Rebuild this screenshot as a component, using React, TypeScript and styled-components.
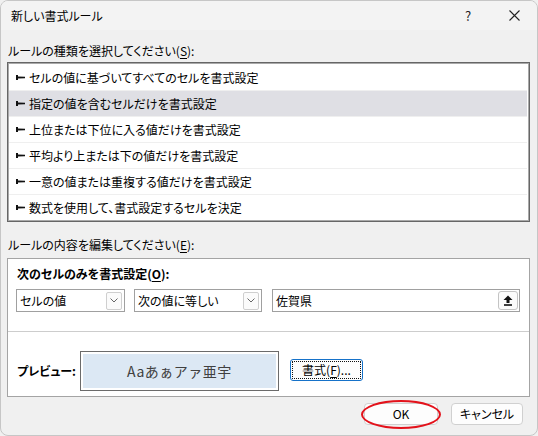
import styled, { createGlobalStyle } from 'styled-components';

const GlobalStyle = createGlobalStyle`
    html, body {
        margin: 0;
        padding: 0;
        background: #f0f0f0;
    }
    body {
        font-family: "Noto Sans CJK JP", "Noto Sans", sans-serif;
        font-size: 12px;
        color: #000;
        font-feature-settings: "palt";
    }
`;

const ruleTypes = [
    'セルの値に基づいてすべてのセルを書式設定',
    '指定の値を含むセルだけを書式設定',
    '上位または下位に入る値だけを書式設定',
    '平均より上または下の値だけを書式設定',
    '一意の値または重複する値だけを書式設定',
    '数式を使用して、書式設定するセルを決定',
];

const Pointer = () => (
    <svg width="9" height="5" viewBox="0 0 9 5">
        <path d="M0 0 L2 0 L2 1.5 L9 1.8 L9 3.2 L2 3.5 L2 5 L0 5 Z" fill="#111" />
    </svg>
);

const Chevron = () => (
    <svg width="8" height="5" viewBox="0 0 8 5">
        <path d="M0.5 0.5 L4 4 L7.5 0.5" fill="none" stroke="#666" strokeWidth="1" />
    </svg>
);

const UploadIcon = () => (
    <svg width="10" height="11" viewBox="0 0 10 11">
        <path d="M5 0.5 L9.5 5 L6.5 5 L6.5 8 L3.5 8 L3.5 5 L0.5 5 Z" fill="#111" />
        <rect x="1" y="9.2" width="8" height="1.6" fill="#111" />
    </svg>
);

const CloseIcon = () => (
    <svg width="11" height="11" viewBox="0 0 11 11">
        <path d="M0.5 0.5 L10.5 10.5 M10.5 0.5 L0.5 10.5" stroke="#222" strokeWidth="1.1" />
    </svg>
);

const App = () => {
    return (
        <>
            <GlobalStyle />
            <Dialog>
                <TitleBar>
                    <Title>新しい書式ルール</Title>
                    <TitleButton>?</TitleButton>
                    <TitleButton>
                        <CloseIcon />
                    </TitleButton>
                </TitleBar>
                <Body>
                    <SectionLabel>
                        ルールの種類を選択してください(<u>S</u>):
                    </SectionLabel>
                    <RuleList>
                        {ruleTypes.map((rule, i) => (
                            <RuleItem key={rule} $selected={i === 1} $first={i === 0}>
                                <Pointer />
                                <span>{rule}</span>
                            </RuleItem>
                        ))}
                    </RuleList>

                    <SectionLabel $gap={15}>
                        ルールの内容を編集してください(<u>E</u>):
                    </SectionLabel>
                    <EditPanel>
                        <EditHeading>
                            次のセルのみを書式設定(<u>O</u>):
                        </EditHeading>
                        <ConditionRow>
                            <Select $width={109}>
                                <SelectText>セルの値</SelectText>
                                <DropButton>
                                    <Chevron />
                                </DropButton>
                            </Select>
                            <Select $width={128}>
                                <SelectText>次の値に等しい</SelectText>
                                <DropButton>
                                    <Chevron />
                                </DropButton>
                            </Select>
                            <ValueInput>
                                <SelectText>佐賀県</SelectText>
                                <RefButton>
                                    <UploadIcon />
                                </RefButton>
                            </ValueInput>
                        </ConditionRow>
                        <Divider />
                        <PreviewRow>
                            <PreviewLabel>プレビュー:</PreviewLabel>
                            <PreviewBox>Aaあぁアァ亜宇</PreviewBox>
                            <FormatButton>
                                書式(<u>F</u>)...
                            </FormatButton>
                        </PreviewRow>
                    </EditPanel>

                    <Footer>
                        <Marked>
                            <DialogButton $width={74}>OK</DialogButton>
                            <Ellipse />
                        </Marked>
                        <DialogButton $width={72}>キャンセル</DialogButton>
                    </Footer>
                </Body>
            </Dialog>
        </>
    );
};

const Dialog = styled.div`
    width: 538px;
    height: 436px;
    box-sizing: border-box;
    background: #f0f0f0;
    border: 1px solid #c6c6c6;
    border-radius: 8px;
    overflow: hidden;
    display: flex;
    flex-direction: column;
`;

const TitleBar = styled.div`
    height: 29px;
    flex: none;
    display: flex;
    align-items: center;
    background: #f3f3f3;
`;

const Title = styled.div`
    flex: 1;
    padding-left: 10px;
    line-height: 16px;
`;

const TitleButton = styled.div`
    width: 46px;
    height: 29px;
    display: flex;
    align-items: center;
    justify-content: center;
    font-size: 13px;
    color: #222;
`;

const Body = styled.div`
    flex: 1;
    display: flex;
    flex-direction: column;
    padding: 0 7px 0 6px;
`;

const SectionLabel = styled.div<{ $gap?: number }>`
    margin-top: ${({ $gap }) => $gap ?? 13}px;
    line-height: 16px;
    padding-left: 1px;

    u {
        text-underline-offset: 2px;
    }
`;

const RuleList = styled.div`
    margin-top: 3px;
    height: 160px;
    box-sizing: border-box;
    background: #fff;
    border: 1px solid #666;
    box-shadow: inset 0 0 0 1px #a9a9a9;
    padding: 2px 2px 0 1px;
    display: flex;
    flex-direction: column;
`;

const RuleItem = styled.div<{ $selected: boolean; $first: boolean }>`
    height: 25px;
    flex: none;
    display: flex;
    align-items: center;
    gap: 4px;
    padding-left: 7px;
    border-top: ${({ $first }) => ($first ? 'none' : '1px solid #efefef')};
    background: ${({ $selected }) => ($selected ? '#dfdfe4' : 'transparent')};
    line-height: 16px;
`;

const EditPanel = styled.div`
    margin-top: 5px;
    height: 139px;
    box-sizing: border-box;
    background: #fff;
    border: 1px solid #a4a4a4;
    display: flex;
    flex-direction: column;
`;

const EditHeading = styled.div`
    padding: 7px 0 0 9px;
    line-height: 16px;
    font-weight: bold;

    u {
        text-underline-offset: 2px;
    }
`;

const ConditionRow = styled.div`
    margin-top: 7px;
    display: flex;
    gap: 9px;
    padding: 0 9px 0 8px;
`;

const Select = styled.div<{ $width: number }>`
    width: ${({ $width }) => $width}px;
    height: 23px;
    box-sizing: border-box;
    border: 1px solid #a0a0a0;
    background: #fff;
    display: flex;
    align-items: center;
    justify-content: space-between;
    padding: 0 2px 0 3px;
`;

const ValueInput = styled(Select).attrs({ $width: 0 })`
    flex: 1;
    width: auto;
    margin-left: 1px;
`;

const SelectText = styled.span`
    line-height: 16px;
`;

const DropButton = styled.div`
    width: 16px;
    height: 18px;
    box-sizing: border-box;
    border: 1px solid #cfcfcf;
    border-radius: 2px;
    background: #fbfbfb;
    display: flex;
    align-items: center;
    justify-content: center;
`;

const RefButton = styled(DropButton)`
    width: 20px;
    height: 19px;
    border-color: #c4c4c4;
    border-radius: 3px;
    margin-right: -1px;
`;

const Divider = styled.div`
    margin-top: 19px;
    height: 1px;
    background: #cdcdcd;
`;

const PreviewRow = styled.div`
    margin-top: 19px;
    display: flex;
    align-items: center;
    padding-left: 9px;
`;

const PreviewLabel = styled.div`
    width: 63px;
    font-weight: bold;
    line-height: 16px;
`;

const PreviewBox = styled.div`
    width: 199px;
    height: 40px;
    box-sizing: border-box;
    border: 1px solid #6b6b6b;
    background: #dce8f4;
    box-shadow: inset 0 0 0 2px #fff;
    display: flex;
    align-items: center;
    justify-content: center;
    font-size: 14px;
    letter-spacing: 0.5px;
    color: #404040;
    font-feature-settings: normal;
`;

const FormatButton = styled.div`
    margin-left: 11px;
    width: 73px;
    height: 22px;
    box-sizing: border-box;
    border: 1px solid #1672c9;
    border-radius: 3px;
    background: #fdfdfd;
    outline: 1px dotted #111;
    outline-offset: -3px;
    display: flex;
    align-items: center;
    justify-content: center;
    line-height: 16px;
    margin-top: -2px;

    u {
        text-underline-offset: 2px;
    }
`;

const Footer = styled.div`
    margin-top: 6px;
    display: flex;
    justify-content: flex-end;
    gap: 13px;
    padding-right: 7px;
`;

const Marked = styled.div`
    position: relative;
`;

const DialogButton = styled.div<{ $width: number }>`
    width: ${({ $width }) => $width}px;
    height: 22px;
    box-sizing: border-box;
    border: 1px solid #d0d0d0;
    border-radius: 4px;
    background: #fdfdfd;
    display: flex;
    align-items: center;
    justify-content: center;
    line-height: 16px;
`;

const Ellipse = styled.div`
    position: absolute;
    left: -3px;
    top: -3px;
    right: -3px;
    bottom: -4px;
    border: 2px solid #e3121b;
    border-radius: 50%;
    pointer-events: none;
`;

export default App;
